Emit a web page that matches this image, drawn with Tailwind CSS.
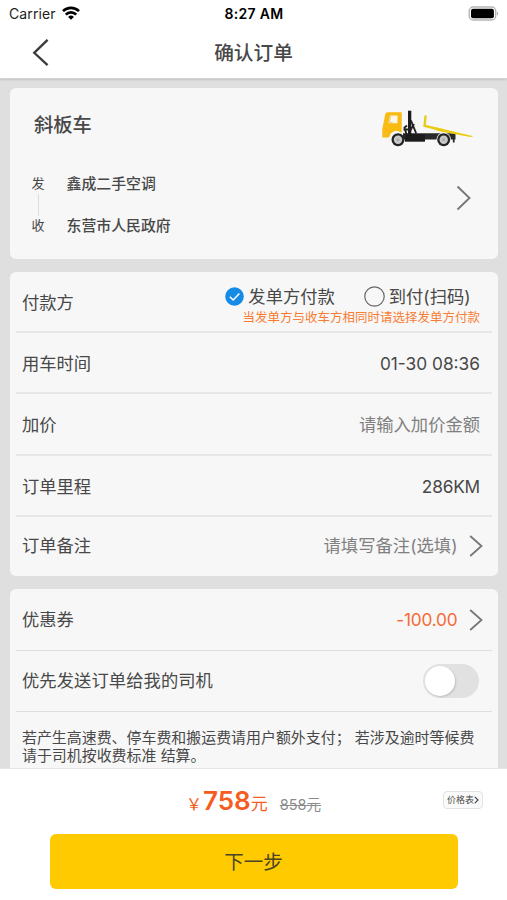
<!DOCTYPE html>
<html lang="zh-CN">
<head>
<meta charset="utf-8">
<title>确认订单</title>
<script src="https://cdn.jsdelivr.net/npm/@tailwindcss/browser@4"></script>
</head>
<body class="bg-white">
<div class="flex h-[900px] w-[507px] flex-col overflow-hidden bg-[#dfdfdf] font-['Inter','Noto_Sans_CJK_SC',sans-serif] text-[17.3px] text-[#484848]">
  <header class="relative z-10 h-[79px] shrink-0 border-b border-[#d2d2d2] bg-white shadow-[0_1px_2px_rgba(0,0,0,0.12)]">
    <div class="grid h-[28px] grid-cols-3 items-center pr-[8px] pl-[9px] text-[14px] leading-[28px] text-black">
      <div class="flex items-center gap-[6px]">
        <span class="tracking-[0.1px] text-[#222]">Carrier</span>
        <svg class="-mt-[2px] h-[14px] w-[18px]" viewBox="0 0 18 14" fill="none" stroke="#000" stroke-width="2.6"><path d="M1 5.2a11.3 11.3 0 0 1 16 0M3.8 8.6a7.3 7.3 0 0 1 10.4 0"/><path d="M9 13.8 6.1 10.9a4.1 4.1 0 0 1 5.8 0Z" fill="#000" stroke="none"/></svg>
      </div>
      <span class="text-center font-semibold tracking-[0.3px] whitespace-nowrap">8:27 AM</span>
      <svg class="-mt-[2px] h-[15px] w-[31px] justify-self-end" viewBox="0 0 31 15"><rect x="1.2" y="1" width="26.500" height="13" rx="4" fill="#fff" stroke="#b5b5b5" stroke-width="1.4"/><rect x="3" y="2.8" width="22.900" height="9.4" rx="2" fill="#000"/><path d="M29 5.200q2.200 2.300 0 4.600z" fill="#aaa"/></svg>
    </div>
    <div class="grid h-[50px] grid-cols-[80px_1fr_80px] items-center">
      <svg class="ml-[32px] h-[28px] w-[17px]" viewBox="0 0 17 28" fill="none" stroke="#3c3c3c" stroke-width="2.3"><path d="M15.6 .8 2.2 13.800l13.4 12.400"/></svg>
      <h1 class="text-center text-[19.7px] leading-[50px] font-medium">确认订单</h1>
    </div>
  </header>

  <main class="flex min-h-0 flex-1 flex-col gap-[12.5px] overflow-hidden pt-[8.500px] pr-[9px] pl-[9.5px]">
    <section class="flex h-[171.5px] shrink-0 flex-col rounded-[6px] bg-[#f7f7f7] pl-[22px]">
      <div class="flex h-[75px] items-center justify-between pr-[23px] pl-[2.500px]">
        <h2 class="text-[19.3px] font-medium">斜板车</h2>
        <svg class="mt-[10px] h-[40px] w-[94px]" viewBox="0 0 94 40">
          <path d="M22 23.300h52.500v6.200H22z" fill="#292929"/>
          <path d="M24 24h20v7.700H24z" fill="#1c1c1c"/>
          <path d="M27 .7h3.300V24H27z" fill="#1d1d1d"/>
          <path d="M30 10.500l5.200 13M26 15.500l-2.500 2 2 7M29 21l4-7M22.500 19.500h8" fill="none" stroke="#222" stroke-width="1.900"/>
          <path d="M4.300 4Q5 2.300 6.500 2.300h14.200v20.200h-1q-5-4-10 1l-1.700 4H1.300V19z" fill="#f9bb11"/>
          <path d="M9 5.600h7.500v7.600H7.500z" fill="#fbf6e8"/>
          <path d="M9.500 6l-1 6.500h3M1.500 24h4" fill="none" stroke="#d8c27c" stroke-width=".8"/>
          <path d="M44.600 5.500 43.600 15.800l17 4.200" fill="none" stroke="#e6cd1c" stroke-width="2.400"/>
          <path d="M43 15l17 3.400 32.500 7.800-3 .8L58 21.200z" fill="#e9cb12"/>
          <circle cx="17" cy="29.700" r="6.500" fill="#242424"/><circle cx="17" cy="29.700" r="4.200" fill="#c9c9c9"/><circle cx="17" cy="29.700" r="1.500" fill="#aaa"/>
          <circle cx="62.700" cy="29.700" r="7.200" fill="#f7f7f7"/>
          <circle cx="62.700" cy="29.700" r="6.500" fill="#242424"/><circle cx="62.700" cy="29.700" r="4.200" fill="#c9c9c9"/><circle cx="62.700" cy="29.700" r="1.500" fill="#aaa"/>
          <path d="M71.800 27h1.800v5.500h-1.800z" fill="#292929"/>
        </svg>
      </div>
      <div class="flex items-center justify-between pt-[8.500px] pr-[27px]">
        <div class="flex flex-col">
          <div class="flex h-[26px] items-center gap-[22px]"><span class="text-[13px]">发</span><span class="text-[14.9px] font-medium">鑫成二手空调</span></div>
          <div class="ml-[6px] h-[16px]"><div class="-mt-[3px] h-[22px] w-px bg-[#dcdcdc]"></div></div>
          <div class="flex h-[26px] items-center gap-[22px]"><span class="text-[13px]">收</span><span class="text-[14.9px] font-medium">东营市人民政府</span></div>
        </div>
        <svg class="-mt-[15px] h-[26px] w-[15px]" viewBox="0 0 15 26" fill="none" stroke="#777" stroke-width="1.900"><path d="M1.500 1.500 13.500 13 1.500 24.500"/></svg>
      </div>
    </section>

    <section class="flex h-[304.500px] shrink-0 flex-col rounded-[6px] bg-[#f7f7f7] px-[6px] [&>div]:px-[6.500px]">
      <div class="flex h-[61.500px] items-center justify-between border-b-2 border-[#e7e7e7]">
        <span class="pt-[4px]">付款方</span>
        <div class="flex flex-col items-end pt-[10px] pr-[5.500px]">
          <div class="flex h-[23px] items-center pr-[9.500px]">
            <svg class="mr-[4px] size-[19px]" viewBox="0 0 19 19"><circle cx="9.500" cy="9.500" r="9.300" fill="#168be5"/><path d="m4.800 9.800 3.400 3.200 6.200-6.500" fill="none" stroke="#fff" stroke-width="1.500"/></svg>
            <span>发单方付款</span>
            <svg class="mr-[4px] ml-[29px] size-[21px]" viewBox="0 0 21 21"><circle cx="10.500" cy="10.500" r="9.700" fill="none" stroke="#666" stroke-width="1.200"/></svg>
            <span class="whitespace-nowrap">到付(扫码)</span>
          </div>
          <span class="text-[12.500px] leading-[19px] text-[#f77d34]">当发单方与收车方相同时请选择发单方付款</span>
        </div>
      </div>
      <div class="flex h-[61px] items-center justify-between border-b-2 border-[#e7e7e7] pt-[3px]"><span>用车时间</span><span class="pr-[5.500px]">01-30 08:36</span></div>
      <div class="flex h-[61.500px] items-center justify-between border-b-2 border-[#e7e7e7] pt-[3px]"><span>加价</span><span class="pr-[5.500px] text-[#808080]">请输入加价金额</span></div>
      <div class="flex h-[61px] items-center justify-between border-b-2 border-[#e7e7e7] pt-[3px]"><span>订单里程</span><span class="pr-[5.500px] tracking-[-0.200px]">286KM</span></div>
      <div class="flex h-[59.500px] items-center justify-between"><span>订单备注</span><div class="flex items-center gap-[11px] pr-[3px]"><span class="tracking-[0.050px] text-[#808080]">请填写备注(选填)</span><svg class="h-[22px] w-[14px]" viewBox="0 0 14 22" fill="none" stroke="#777" stroke-width="1.800"><path d="M1.200 1 12.500 11 1.200 21"/></svg></div></div>
    </section>

    <section class="flex h-[220px] shrink-0 flex-col rounded-t-[6px] bg-[#f7f7f7] px-[6px] [&>div]:px-[6.500px]">
      <div class="flex h-[62px] items-center justify-between border-b border-[#dedede] pt-px"><span>优惠券</span><div class="flex items-center gap-[11px] pr-[3px]"><span class="tracking-[-0.200px] text-[#f66b35]">-100.00</span><svg class="h-[22px] w-[14px]" viewBox="0 0 14 22" fill="none" stroke="#777" stroke-width="1.800"><path d="M1.200 1 12.500 11 1.200 21"/></svg></div></div>
      <div class="flex h-[61px] items-center justify-between border-b border-[#dedede]"><span class="tracking-[0.080px]">优先发送订单给我的司机</span><div class="mr-[6.500px] flex h-[34px] w-[56px] items-center rounded-full bg-[#e1e1e1] pl-[2px]"><div class="size-[30px] rounded-full bg-white shadow-[1px_1px_2px_rgba(0,0,0,0.15)]"></div></div></div>
      <div class="pt-[18.500px] text-[14.950px] leading-[17.500px] whitespace-nowrap"><p>若产生高速费、停车费和搬运费请用户额外支付； 若涉及逾时等候费</p><p>请于司机按收费标准 结算。</p></div>
    </section>
  </main>

  <footer class="h-[132.500px] shrink-0 border-t border-[#e6e6e6] bg-white">
    <div class="grid h-[65px] grid-cols-[186px_1fr_auto] items-center pr-[24px]">
      <div class="col-start-2 -mt-[2px] flex items-baseline text-[#f65b20]">
        <span class="mr-[1px] text-[16px] font-['Noto_Sans_CJK_SC']">￥</span><span class="text-[26px] font-semibold">758</span><span class="text-[17px]">元</span>
        <span class="ml-[12px] text-[14.500px] text-[#8c8c8c] line-through">858元</span>
      </div>
      <div class="-mt-[2px] flex h-[18px] items-center rounded-[4px] border border-[#e2e2e2] bg-[#fafafa] px-[3px] text-[9px] whitespace-nowrap">价格表<svg class="h-[8px] w-[5px]" viewBox="0 0 5 8" fill="none" stroke="#444" stroke-width="1.200"><path d="m.8.8 3.200 3.200L.8 7.200"/></svg></div>
    </div>
    <button class="mx-auto flex h-[55px] w-[408px] items-center justify-center rounded-[6px] bg-[#ffcb00] pt-[4px] text-[19.500px] text-[#494325]">下一步</button>
  </footer>
</div>
</body>
</html>
